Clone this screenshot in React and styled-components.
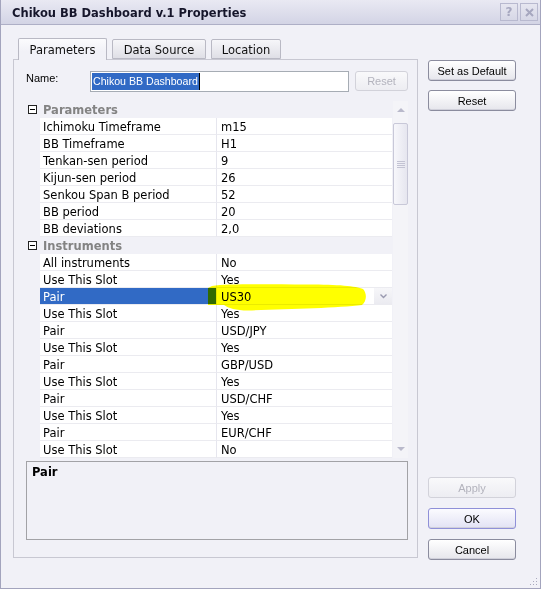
import React from 'react';
import styled, { createGlobalStyle } from 'styled-components';

const GlobalStyle = createGlobalStyle`
  html, body {
    margin: 0;
    padding: 0;
    background: #f1f1f7;
  }
  body {
    font-family: "DejaVu Sans", Verdana, sans-serif;
  }
  * {
    box-sizing: border-box;
  }
`;

const parameters = [
    ['Ichimoku Timeframe', 'm15'],
    ['BB Timeframe', 'H1'],
    ['Tenkan-sen period', '9'],
    ['Kijun-sen period', '26'],
    ['Senkou Span B period', '52'],
    ['BB period', '20'],
    ['BB deviations', '2,0'],
];

const instruments = [
    ['All instruments', 'No'],
    ['Use This Slot', 'Yes'],
    ['Pair', 'US30', true],
    ['Use This Slot', 'Yes'],
    ['Pair', 'USD/JPY'],
    ['Use This Slot', 'Yes'],
    ['Pair', 'GBP/USD'],
    ['Use This Slot', 'Yes'],
    ['Pair', 'USD/CHF'],
    ['Use This Slot', 'Yes'],
    ['Pair', 'EUR/CHF'],
    ['Use This Slot', 'No'],
];

const Category = ({ title }) => (
    <CategoryRow>
        <Margin><MinusBox /></Margin>
        <CategoryTitle>{title}</CategoryTitle>
    </CategoryRow>
);

const Property = ({ name, value, selected }) => (
    <PropRow>
        <Margin />
        <NameCell $selected={selected}>{name}</NameCell>
        <ValueCell>
            {value}
            {selected && (
                <DropButton>
                    <svg width="7" height="5" viewBox="0 0 7 5">
                        <path d="M0.5 0.5 L3.5 3.5 L6.5 0.5" fill="none" stroke="#9a9ab0" strokeWidth="1.4" />
                    </svg>
                </DropButton>
            )}
        </ValueCell>
        {selected && (
            <Marker width="160" height="27" viewBox="0 0 160 27">
                <path d="M0 4 L4 2 C20 -0.5 60 0.5 100 0.5 C130 0.5 148 2 155 5 C159 9 159 17 154 21 C130 24 80 25 40 26.5 C28 26.5 20 24 16 21 L0 21 Z" fill="#ffff00" />
            </Marker>
        )}
    </PropRow>
);

const App = () => {
    return (
        <>
            <GlobalStyle />
            <Window>
                <TitleBar>
                    <Title>Chikou BB Dashboard v.1 Properties</Title>
                    <CaptionButtons>
                        <CaptionButton>?</CaptionButton>
                        <CaptionButton>
                            <svg width="9" height="9" viewBox="0 0 9 9">
                                <path d="M1 1 L8 8 M8 1 L1 8" stroke="#a6a7bf" strokeWidth="2" />
                            </svg>
                        </CaptionButton>
                    </CaptionButtons>
                </TitleBar>
                <Body>
                    <LeftColumn>
                        <TabStrip>
                            <Tab $active $w={89}>Parameters</Tab>
                            <Tab $w={94}>Data Source</Tab>
                            <Tab $w={70}>Location</Tab>
                        </TabStrip>
                        <Panel>
                            <NameRow>
                                <NameLabel>Name:</NameLabel>
                                <NameInput>
                                    <Selection>Chikou BB Dashboard</Selection>
                                    <Caret />
                                </NameInput>
                                <Button $disabled $w={53} $h={20}>Reset</Button>
                            </NameRow>
                            <Grid>
                                <Rows>
                                    <Category title="Parameters" />
                                    {parameters.map(([n, v], i) => (
                                        <Property key={'p' + i} name={n} value={v} />
                                    ))}
                                    <Category title="Instruments" />
                                    {instruments.map(([n, v, s], i) => (
                                        <Property key={'i' + i} name={n} value={v} selected={s} />
                                    ))}
                                </Rows>
                                <ScrollBar>
                                    <ScrollArrow>
                                        <svg width="8" height="5" viewBox="0 0 8 5">
                                            <path d="M0 5 L4 1 L8 5 Z" fill="#b9b9cb" />
                                        </svg>
                                    </ScrollArrow>
                                    <Thumb>
                                        <Grip />
                                    </Thumb>
                                    <Track />
                                    <ScrollArrow>
                                        <svg width="8" height="5" viewBox="0 0 8 5">
                                            <path d="M0 0 L4 4 L8 0 Z" fill="#b9b9cb" />
                                        </svg>
                                    </ScrollArrow>
                                </ScrollBar>
                            </Grid>
                            <Description>
                                <DescTitle>Pair</DescTitle>
                            </Description>
                        </Panel>
                    </LeftColumn>
                    <RightColumn>
                        <Button $w={88}>Set as Default</Button>
                        <Button $w={88}>Reset</Button>
                        <BottomButtons>
                            <Button $disabled $w={88}>Apply</Button>
                            <Button $default $w={88}>OK</Button>
                            <Button $w={88}>Cancel</Button>
                        </BottomButtons>
                    </RightColumn>
                </Body>
                <ResizeGrip width="8" height="8" viewBox="0 0 8 8">
                    <rect x="6" y="0" width="1" height="1" fill="#a9a9bd" />
                    <rect x="3" y="3" width="1" height="1" fill="#a9a9bd" />
                    <rect x="6" y="3" width="1" height="1" fill="#a9a9bd" />
                    <rect x="0" y="6" width="1" height="1" fill="#a9a9bd" />
                    <rect x="3" y="6" width="1" height="1" fill="#a9a9bd" />
                    <rect x="6" y="6" width="1" height="1" fill="#a9a9bd" />
                </ResizeGrip>
            </Window>
        </>
    );
};

const Window = styled.div`
    width: 541px;
    height: 589px;
    border: 1px solid #a3a4bd;
    border-top: none;
    background: #f1f1f7;
    display: flex;
    flex-direction: column;
    position: relative;
`;

const TitleBar = styled.div`
    height: 25px;
    flex-shrink: 0;
    display: flex;
    align-items: center;
    justify-content: space-between;
    padding: 0 2px 0 11px;
    background: linear-gradient(#e9e9f3, #d3d4e5);
    border-bottom: 1px solid #aeafc6;
`;

const Title = styled.div`
    font-family: "DejaVu Sans", Verdana, sans-serif;
    font-weight: bold;
    font-size: 11.5px;
    color: #15152a;
    padding-top: 1px;
`;

const CaptionButtons = styled.div`
    display: flex;
    gap: 2px;
`;

const CaptionButton = styled.div`
    width: 18px;
    height: 18px;
    border: 1px solid #b8b9cf;
    background: linear-gradient(#e6e6f0, #d6d7e6);
    display: flex;
    align-items: center;
    justify-content: center;
    font-family: "DejaVu Sans", Verdana, sans-serif;
    font-weight: bold;
    font-size: 12px;
    color: #a6a7bf;
`;

const Body = styled.div`
    flex: 1;
    display: flex;
    padding: 12px 0 0 12px;
`;

const LeftColumn = styled.div`
    width: 405px;
    display: flex;
    flex-direction: column;
`;

const TabStrip = styled.div`
    height: 22px;
    display: flex;
    align-items: flex-end;
    gap: 5px;
    padding-left: 5px;
`;

const Tab = styled.div`
    position: relative;
    z-index: 1;
    width: ${p => p.$w}px;
    height: ${p => (p.$active ? 22 : 20)}px;
    margin-bottom: ${p => (p.$active ? -1 : 0)}px;
    border: 1px solid #b9b9c4;
    border-bottom: ${p => (p.$active ? 'none' : '1px solid #b9b9c4')};
    border-radius: 2px 2px 0 0;
    background: ${p => (p.$active
        ? 'linear-gradient(#fbfbfd, #f1f1f7 60%)'
        : 'linear-gradient(#f6f6f9, #dfdfe6)')};
    display: flex;
    align-items: center;
    justify-content: center;
    padding-top: ${p => (p.$active ? 0 : 1)}px;
    font-size: 11.5px;
    color: #111;
`;

const Panel = styled.div`
    height: 499px;
    border: 1px solid #c8c8d2;
    background: #f1f1f7;
    padding: 11px 9px 17px 12px;
    display: flex;
    flex-direction: column;
`;

const NameRow = styled.div`
    height: 21px;
    display: flex;
    align-items: flex-start;
`;

const NameLabel = styled.div`
    width: 64px;
    font-family: "Liberation Sans", Arial, sans-serif;
    font-size: 11px;
    line-height: 13px;
    padding-top: 1px;
    color: #000;
`;

const NameInput = styled.div`
    width: 259px;
    height: 21px;
    margin-right: 6px;
    border: 1px solid #a6acb4;
    background: #fff;
    padding: 1px;
    display: flex;
    align-items: stretch;
`;

const Selection = styled.span`
    background: #316ac5;
    color: #fff;
    font-family: "Liberation Sans", Arial, sans-serif;
    font-size: 10.6px;
    line-height: 17px;
    padding: 0 1px;
`;

const Caret = styled.span`
    width: 1px;
    background: #000;
`;

const Button = styled.div`
    width: ${p => p.$w}px;
    height: ${p => p.$h || 21}px;
    flex-shrink: 0;
    border: 1px solid ${p => (p.$disabled ? '#d2d2da' : p.$default ? '#8f90d8' : '#8b8c9e')};
    border-radius: 3px;
    background: ${p => (p.$disabled
        ? 'linear-gradient(#f9f9fb, #ededf2)'
        : p.$default
            ? 'linear-gradient(#fbfbff, #e2e2f4)'
            : 'linear-gradient(#ffffff, #e6e6ec)')};
    box-shadow: ${p => (p.$disabled ? 'none' : 'inset 0 -1px 0 #d0d0da')};
    display: flex;
    align-items: center;
    justify-content: center;
    font-family: "Liberation Sans", Arial, sans-serif;
    font-size: 11px;
    color: ${p => (p.$disabled ? '#b3b3bd' : '#000')};
`;

const Grid = styled.div`
    height: 357px;
    margin: 9px 0 0 1px;
    display: flex;
`;

const Rows = styled.div`
    flex: 1;
    display: flex;
    flex-direction: column;
`;

const CategoryRow = styled.div`
    height: 17px;
    display: flex;
    align-items: center;
`;

const Margin = styled.div`
    width: 13px;
    height: 100%;
    flex-shrink: 0;
    display: flex;
    align-items: center;
`;

const MinusBox = styled.div`
    width: 9px;
    height: 9px;
    margin-left: 1px;
    border: 1px solid #222;
    background: #fff;
    position: relative;
    &:after {
        content: '';
        position: absolute;
        left: 1px;
        right: 1px;
        top: 3px;
        height: 1px;
        background: #000;
    }
`;

const CategoryTitle = styled.div`
    padding-left: 3px;
    font-weight: bold;
    font-size: 11.5px;
    color: #838383;
`;

const PropRow = styled.div`
    position: relative;
    height: 17px;
    display: grid;
    grid-template-columns: 13px 177px 1fr;
`;

const NameCell = styled.div`
    background: ${p => (p.$selected ? '#316ac5' : '#fff')};
    color: ${p => (p.$selected ? '#fff' : '#000')};
    border-bottom: 1px solid #ebebf0;
    border-right: 1px solid #e6e6ee;
    padding-left: 3px;
    font-size: 11.5px;
    line-height: 18px;
    overflow: hidden;
    white-space: nowrap;
`;

const ValueCell = styled.div`
    position: relative;
    background: #fff;
    border-bottom: 1px solid #ebebf0;
    padding-left: 4px;
    font-size: 11.5px;
    line-height: 18px;
    overflow: hidden;
    color: #000;
`;

const DropButton = styled.div`
    position: absolute;
    right: 0;
    top: 0;
    width: 18px;
    height: 16px;
    background: linear-gradient(#f6f6f9, #ebebf1);
    display: flex;
    align-items: center;
    justify-content: center;
`;

const Marker = styled.svg`
    position: absolute;
    left: 181px;
    top: -4px;
    z-index: 2;
    mix-blend-mode: multiply;
    pointer-events: none;
`;

const ScrollBar = styled.div`
    width: 15px;
    margin-left: 1px;
    background: #f4f4f8;
    display: flex;
    flex-direction: column;
`;

const ScrollArrow = styled.div`
    height: 17px;
    display: flex;
    align-items: center;
    justify-content: center;
`;

const Thumb = styled.div`
    height: 82px;
    margin: 5px 0 0 0;
    border: 1px solid #c8c8d8;
    border-radius: 2px;
    background: linear-gradient(to right, #f7f7fb, #e6e6ef);
    display: flex;
    align-items: center;
    justify-content: center;
`;

const Grip = styled.div`
    width: 8px;
    height: 7px;
    background: repeating-linear-gradient(#c3c3d3 0 1px, transparent 1px 2px);
`;

const Track = styled.div`
    flex: 1;
`;

const Description = styled.div`
    height: 79px;
    margin-top: 3px;
    border: 1px solid #a2a2a6;
    padding: 3px 5px;
`;

const DescTitle = styled.div`
    font-weight: bold;
    font-size: 11.5px;
    line-height: 14px;
    color: #000;
`;

const RightColumn = styled.div`
    width: 88px;
    margin-left: 10px;
    padding: 23px 0 28px;
    display: flex;
    flex-direction: column;
    gap: 9px;
`;

const BottomButtons = styled.div`
    margin-top: auto;
    display: flex;
    flex-direction: column;
    gap: 10px;
`;

const ResizeGrip = styled.svg`
    position: absolute;
    right: 2px;
    bottom: 2px;
`;

export default App;
